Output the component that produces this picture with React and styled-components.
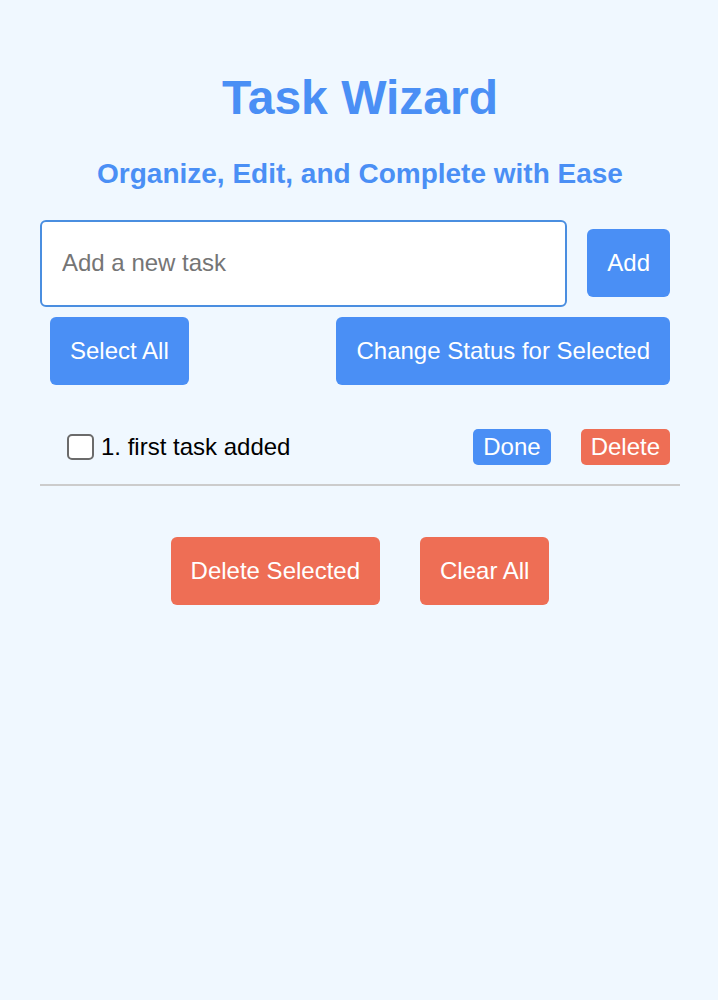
import React, { useState } from 'react';
import styled, { createGlobalStyle } from 'styled-components';

const GlobalStyle = createGlobalStyle`
  html, body {
    margin: 0;
    padding: 0;
    background-color: #f0f8ff;
    font-family: "Liberation Sans", Arial, Helvetica, sans-serif;
  }
`;

const Page = styled.div`
  min-height: 1000px;
  background-color: #f0f8ff;
  padding: 74px 38px 0 40px;
  box-sizing: border-box;
`;

const Wrapper = styled.div`
  width: 640px;
  display: flex;
  flex-direction: column;
`;

const Title = styled.h1`
  margin: 0;
  text-align: center;
  color: #4a8ff5;
  font-size: 48px;
  font-weight: 700;
  line-height: 48px;
`;

const SubTitle = styled.h2`
  margin: 36px 0 0;
  text-align: center;
  color: #4a8ff5;
  font-size: 28px;
  font-weight: 700;
  line-height: 32px;
`;

const Row = styled.div`
  display: flex;
  align-items: center;
  justify-content: ${(p) => p.$justify || 'flex-start'};
`;

const InputRow = styled(Row)`
  margin-top: 29px;
`;

const TaskInput = styled.input`
  flex: 1;
  height: 87px;
  box-sizing: border-box;
  border: 2px solid #4a8ee0;
  border-radius: 6px;
  padding: 0 20px;
  font-size: 24px;
  font-family: inherit;
  background: #fff;
  outline: none;
  &::placeholder {
    color: #757575;
  }
`;

const Button = styled.button`
  margin: ${(p) => (p.$wide ? '10px 10px 10px 20px' : '10px')};
  height: 68px;
  padding: 0 20px;
  border: none;
  border-radius: 6px;
  background-color: ${(p) => (p.$danger ? '#ee6e55' : '#4a8ff5')};
  color: #fff;
  font-size: 24px;
  font-family: inherit;
  cursor: pointer;
  white-space: nowrap;
`;

const TaskList = styled.ul`
  list-style: none;
  margin: 15px 0 0;
  padding: 0;
`;

const TaskItem = styled.li`
  display: flex;
  align-items: center;
  height: 74px;
  padding: 0 10px 0 27px;
  border-bottom: 2px solid #cccccc;
`;

const CheckBox = styled.input`
  appearance: none;
  margin: 0;
  width: 27px;
  height: 26px;
  border: 2px solid #6b6b6b;
  border-radius: 5px;
  background: #fff;
  box-sizing: border-box;
`;

const TaskText = styled.span`
  flex: 1;
  margin-left: 7px;
  font-size: 24px;
  color: #000;
`;

const SmallButton = styled.button`
  height: 36px;
  padding: 0 10px;
  border: none;
  border-radius: 5px;
  background-color: ${(p) => (p.$danger ? '#ee6e55' : '#4a8ff5')};
  color: #fff;
  font-size: 24px;
  font-family: inherit;
  & + & {
    margin-left: 30px;
  }
`;

const BottomRow = styled(Row)`
  margin-top: 41px;
  justify-content: center;
  gap: 20px;
`;

const App = () => {
  const [tasks] = useState(['first task added']);
  return (
    <Page>
      <GlobalStyle />
      <Wrapper>
        <Title>Task Wizard</Title>
        <SubTitle>Organize, Edit, and Complete with Ease</SubTitle>
        <InputRow>
          <TaskInput placeholder="Add a new task" />
          <Button $wide>Add</Button>
        </InputRow>
        <Row $justify="space-between">
          <Button>Select All</Button>
          <Button>Change Status for Selected</Button>
        </Row>
        <TaskList>
          {tasks.map((t, i) => (
            <TaskItem key={i}>
              <CheckBox type="checkbox" />
              <TaskText>
                {i + 1}. {t}
              </TaskText>
              <SmallButton>Done</SmallButton>
              <SmallButton $danger>Delete</SmallButton>
            </TaskItem>
          ))}
        </TaskList>
        <BottomRow>
          <Button $danger>Delete Selected</Button>
          <Button $danger>Clear All</Button>
        </BottomRow>
      </Wrapper>
    </Page>
  );
};

export default App;
